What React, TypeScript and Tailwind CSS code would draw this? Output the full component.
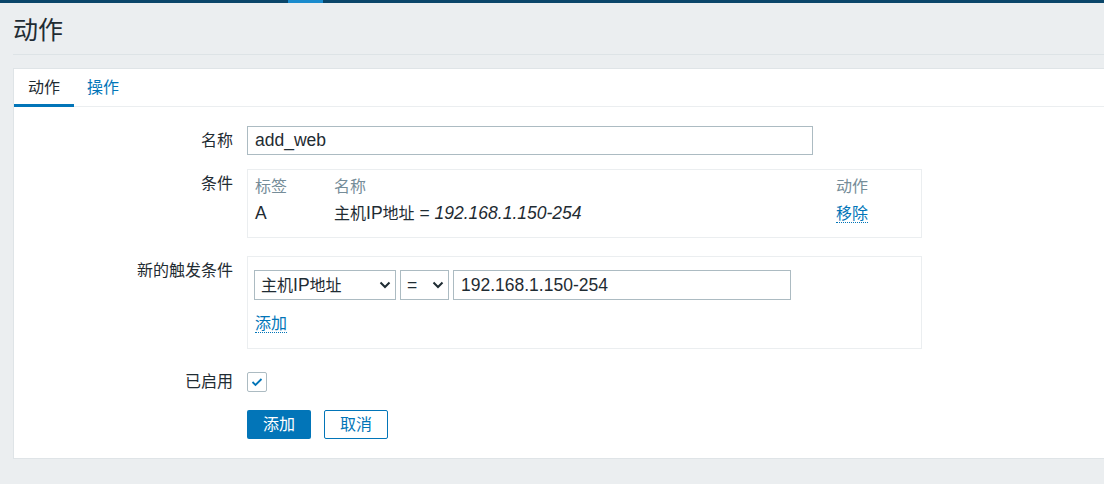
import React from 'react';

const font = { fontFamily: '"Liberation Sans", "Noto Sans CJK SC", sans-serif' };

function Chevron() {
  return (
    <svg width="12" height="8" viewBox="0 0 12 8" className="shrink-0">
      <path d="M1.5 1.5 L6 6 L10.5 1.5" fill="none" stroke="#1f2c33" strokeWidth="2" />
    </svg>
  );
}

// latin runs render a bit wider than the CJK ones in the reference
function L({ children, className = '' }: { children: React.ReactNode; className?: string }) {
  return <span className={`text-[17.5px] ${className}`}>{children}</span>;
}

function Label({ children }: { children: React.ReactNode }) {
  return <div className="h-[29px] leading-[29px] text-right text-[#1f2c33]">{children}</div>;
}

function DottedLink({ children }: { children: React.ReactNode }) {
  return (
    <span className="text-[#0275b8] border-b border-dotted border-[#0275b8] leading-[18px] cursor-pointer">
      {children}
    </span>
  );
}

export default function App() {
  return (
    <div className="w-[1104px] h-[484px] bg-[#ebeef0] overflow-hidden text-[16px]" style={font}>
      {/* top strip */}
      <div className="h-[3px] bg-[#0a466a] flex">
        <div className="ml-[288px] w-[35px] bg-[#1a8bcd]" />
      </div>

      {/* page header */}
      <div className="ml-[13px] h-[52px] flex items-center border-b border-[#dde3e6]">
        <h1 className="text-[25px] text-[#1f2c33] leading-none pt-[3px]">动作</h1>
      </div>

      {/* card */}
      <div className="ml-[13px] mt-[13px] bg-white border border-r-0 border-[#dfe4e7] pb-[19px]">
        {/* tabs */}
        <div className="h-[38px] flex border-b border-[#ebeef0]">
          <div className="px-[14px] h-[38px] flex items-center text-[#1f2c33] border-b-[3px] border-[#0275b8] pt-[2px]">
            动作
          </div>
          <div className="px-[13px] h-[38px] flex items-center text-[#0275b8] pb-[1px]">操作</div>
        </div>

        <div className="grid grid-cols-[219px_1fr] gap-x-[14px] pt-[19px]">
          {/* name */}
          <Label>名称</Label>
          <div>
            <div className="w-[566px] h-[29px] border border-[#acbbc2] px-[7px] flex items-center text-[#1f2c33]">
              <L>add_web</L>
            </div>
          </div>

          {/* conditions */}
          <div className="mt-[14px]">
            <Label>条件</Label>
          </div>
          <div className="mt-[14px]">
            <div className="w-[675px] border border-[#ebeef0] pt-[3px] pb-[10px] px-[7px]">
              <div className="grid grid-cols-[79px_1fr_78px] h-[27px] items-center text-[#768d99]">
                <div>标签</div>
                <div>名称</div>
                <div>动作</div>
              </div>
              <div className="grid grid-cols-[79px_1fr_78px] h-[27px] items-center text-[#1f2c33]">
                <div>
                  <L>A</L>
                </div>
                <div>
                  主机<L>IP</L>地址<L> = </L>
                  <L className="italic">192.168.1.150-254</L>
                </div>
                <div>
                  <DottedLink>移除</DottedLink>
                </div>
              </div>
            </div>
          </div>

          {/* new condition */}
          <div className="mt-[18px]">
            <Label>新的触发条件</Label>
          </div>
          <div className="mt-[18px]">
            <div className="w-[675px] h-[93px] border border-[#ebeef0] pt-[13px] px-[6px]">
              <div className="flex items-center">
                <div className="w-[142px] h-[30px] border border-[#acbbc2] flex items-center justify-between pl-[6px] pr-[4px] text-[#1f2c33]">
                  <span>
                    主机<L>IP</L>地址
                  </span>
                  <Chevron />
                </div>
                <div className="ml-[4px] w-[49px] h-[30px] border border-[#acbbc2] flex items-center justify-between pl-[6px] pr-[4px] text-[#1f2c33]">
                  <L>=</L>
                  <Chevron />
                </div>
                <div className="ml-[4px] w-[338px] h-[30px] border border-[#acbbc2] flex items-center px-[7px] text-[#1f2c33]">
                  <L>192.168.1.150-254</L>
                </div>
              </div>
              <div className="mt-[12px] pl-[1px]">
                <DottedLink>添加</DottedLink>
              </div>
            </div>
          </div>

          {/* enabled */}
          <div className="mt-[18px]">
            <Label>已启用</Label>
          </div>
          <div className="mt-[18px] h-[29px] flex items-center">
            <div className="w-[20px] h-[20px] border border-[#acbbc2] rounded-[2px] flex items-center justify-center">
              <svg width="12" height="10" viewBox="0 0 12 10">
                <path d="M1.5 5 L4.5 8 L10.5 2" fill="none" stroke="#0275b8" strokeWidth="1.8" />
              </svg>
            </div>
          </div>

          {/* buttons */}
          <div />
          <div className="mt-[14px] flex gap-[13px]">
            <button className="w-[64px] h-[29px] bg-[#0275b8] text-white rounded-[2px] leading-none">添加</button>
            <button className="w-[64px] h-[29px] bg-white border border-[#0275b8] text-[#0275b8] rounded-[2px] leading-none">
              取消
            </button>
          </div>
        </div>
      </div>
    </div>
  );
}
